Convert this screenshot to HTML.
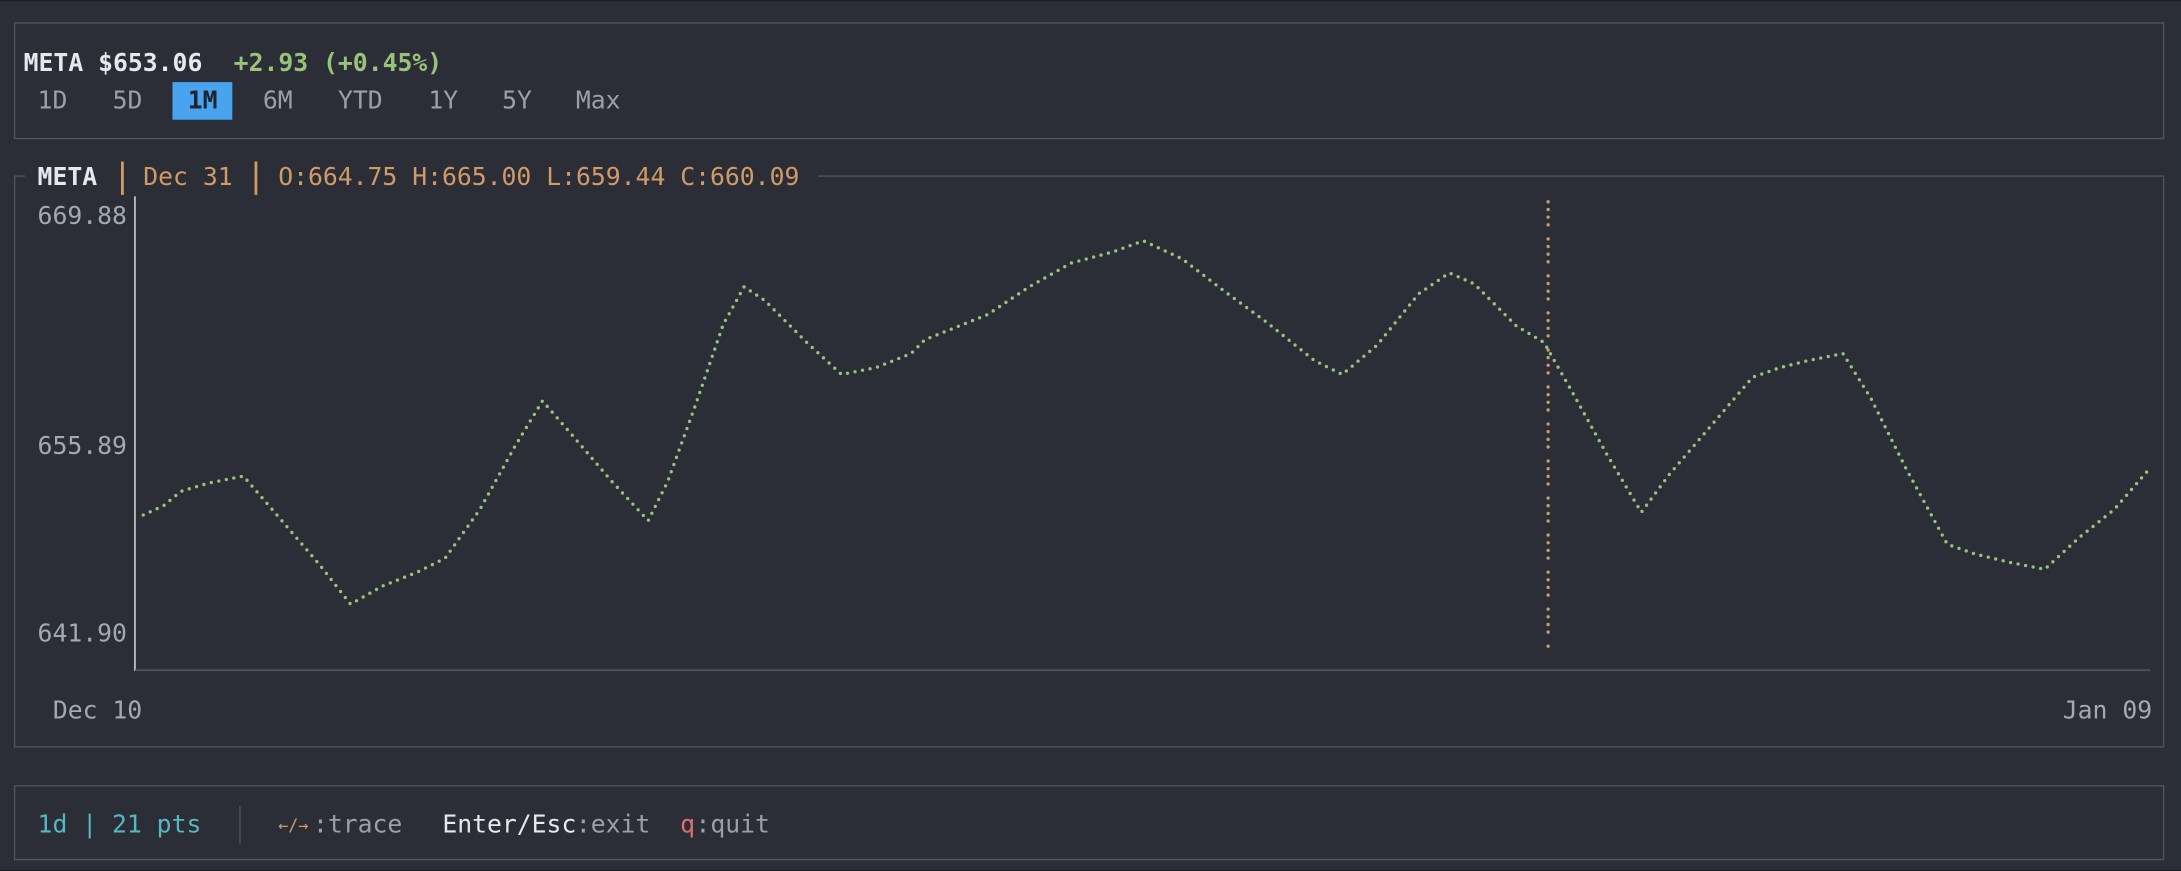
<!DOCTYPE html>
<html><head><meta charset="utf-8"><style>
html,body{margin:0;padding:0;background:#1e2025;width:2181px;height:870px;overflow:hidden}
#w{position:absolute;left:0;top:0;width:1568px;height:625px;transform:scale(1.39094,1.392);transform-origin:0 0;background:#2b2e36;border-top:1.5px solid #1c1e22;box-sizing:border-box}
.p{position:absolute;border:1.2px solid #4e5461;box-sizing:border-box}
.t{position:absolute;font-family:"DejaVu Sans Mono","Liberation Mono",monospace;font-size:17.8px;line-height:22px;margin-top:-11px;white-space:pre;color:#9aa0aa}
.b{font-weight:bold}
</style></head><body><div id="w">
<div class="p" style="left:10px;top:15px;width:1546px;height:84px"></div>
<div class="t b" style="left:17px;top:45px;color:#e6e8ec">META $653.06</div>
<div class="t b" style="left:168px;top:45px;color:#98c379">+2.93 (+0.45%)</div>
<div style="position:absolute;left:124px;top:58px;width:43px;height:27px;background:#4aa3ee"></div>
<div class="t" style="left:27px;top:72px">1D</div>
<div class="t" style="left:81px;top:72px">5D</div>
<div class="t b" style="left:135px;top:72px;color:#1d2430">1M</div>
<div class="t" style="left:189px;top:72px">6M</div>
<div class="t" style="left:243px;top:72px">YTD</div>
<div class="t" style="left:308px;top:72px">1Y</div>
<div class="t" style="left:361px;top:72px">5Y</div>
<div class="t" style="left:414px;top:72px">Max</div>

<div class="p" style="left:10px;top:125px;width:1546px;height:411px"></div>
<div style="position:absolute;left:18px;top:115px;width:570px;height:22px;background:#2b2e36"></div>
<div class="t b" style="left:27px;top:127px;color:#e6e8ec">META</div>
<div style="position:absolute;left:87px;top:115px;width:1.5px;height:24px;background:#d19a66"></div>
<div class="t" style="left:103px;top:127px;color:#d19a66">Dec 31</div>
<div style="position:absolute;left:183px;top:115px;width:1.5px;height:24px;background:#d19a66"></div>
<div class="t" style="left:200px;top:127px;color:#d19a66">O:664.75 H:665.00 L:659.44 C:660.09</div>
<div class="t" style="left:27px;top:155px;color:#a3a9b3">669.88</div>
<div class="t" style="left:27px;top:320px;color:#a3a9b3">655.89</div>
<div class="t" style="left:27px;top:455px;color:#a3a9b3">641.90</div>
<div class="t" style="left:38px;top:510px;color:#a3a9b3">Dec 10</div>
<div class="t" style="left:1483px;top:510px;color:#a3a9b3">Jan 09</div>
<svg style="position:absolute;left:0;top:0" width="1568" height="625" viewBox="0 0 1568 625">
<line x1="97" y1="140" x2="97" y2="481" stroke="#c8ccd2" stroke-width="1.2"/>
<line x1="97" y1="480.5" x2="1546" y2="480.5" stroke="#4e5461" stroke-width="1.2"/>
<line x1="1113" y1="144" x2="1113" y2="464" stroke="#d19a66" stroke-width="2.4" stroke-linecap="round" stroke-dasharray="0 5.5 0 5.5 0 5.5 0 10.1"/>
<polyline fill="none" stroke="#9bc27a" stroke-width="2.4" stroke-linecap="round" stroke-dasharray="0 5.5" points="103,369 118,362 130,352 150,346 175,341 200,370 230,405 252,433 275,420 300,410 320,400 345,365 370,320 390,287 410,310 440,345 466,373 480,345 500,290 520,232 535,205 550,215 580,245 605,268 630,263 655,253 665,243 710,225 740,205 770,188 800,180 822,172 850,185 880,208 910,230 945,258 965,268 990,247 1020,210 1042,195 1060,203 1090,233 1110,245 1130,280 1155,325 1180,367 1200,340 1230,305 1260,270 1280,263 1300,258 1325,253 1345,285 1370,335 1400,390 1420,397 1445,403 1470,408 1495,385 1520,365 1546,335"/>
</svg>

<div class="p" style="left:10px;top:563px;width:1546px;height:54px"></div>
<div class="t" style="left:27px;top:592px;color:#56b6c2">1d | 21 pts</div>
<div style="position:absolute;left:172px;top:578px;width:1.2px;height:27px;background:#4e5461"></div>
<div class="t" style="left:200px;top:592px;color:#d19a66;font-size:12px">←/→</div>
<div class="t" style="left:225px;top:592px">:trace</div>
<div class="t" style="left:318px;top:592px;color:#e6e8ec">Enter/Esc</div>
<div class="t" style="left:414px;top:592px">:exit</div>
<div class="t" style="left:489px;top:592px;color:#e06c75">q</div>
<div class="t" style="left:500px;top:592px">:quit</div>
</div></body></html>
